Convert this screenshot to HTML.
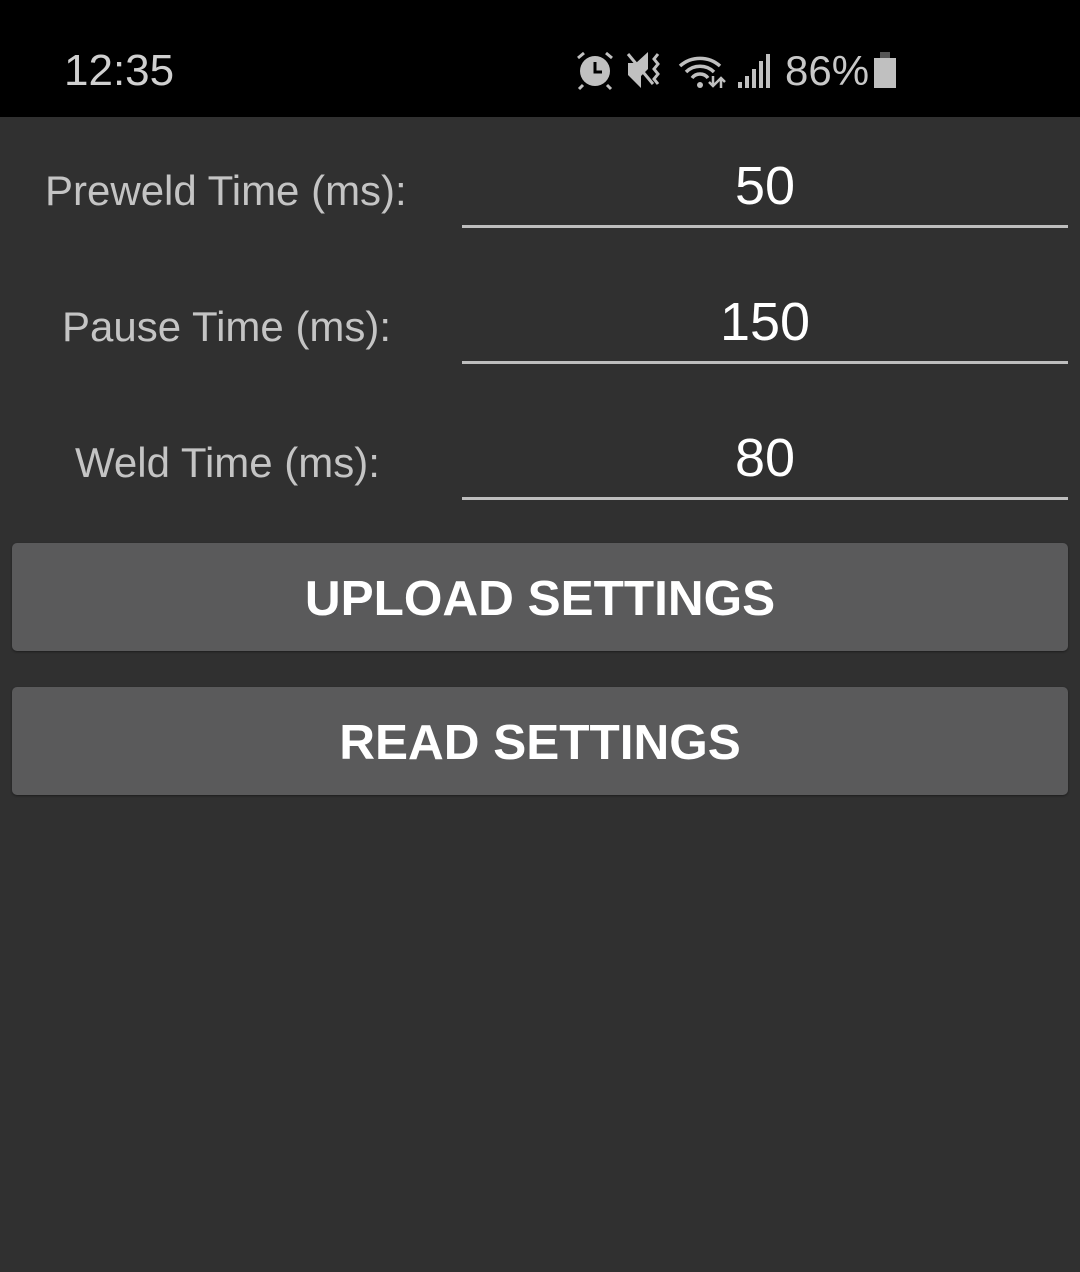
<!DOCTYPE html>
<html><head><style>
body{margin:0;width:1080px;height:1272px;background:#303030;font-family:"Liberation Sans",sans-serif;position:relative;overflow:hidden}
.sb{position:absolute;left:0;top:0;width:1080px;height:117px;background:#000}
.t{position:absolute;white-space:nowrap}
.lab{color:#c4c4c4;font-size:42px;}
.val{color:#fff;font-size:54px;width:606px;left:462px;text-align:center}
.ul{position:absolute;left:462px;width:606px;height:3px;background:#bdbdbd}
.btn{position:absolute;left:12px;width:1056px;height:108px;background:#5a5a5b;border-radius:5px;color:#fff;font-weight:bold;font-size:49.5px;text-align:center;line-height:112px;box-shadow:0 1px 2px rgba(0,0,0,.4)}
</style></head><body>
<div class="sb"></div>
<div class="t" style="left:64px;top:46px;color:#d0d0d0;font-size:44px">12:35</div>
<svg style="position:absolute;left:570px;top:48px" width="340" height="44" viewBox="0 0 340 44">
<g fill="#c0c0c0" stroke="#c0c0c0">
<circle cx="25" cy="23" r="15" stroke="none"/>
<path d="M25 14v10h7" stroke="#000" stroke-width="3" fill="none"/>
<path d="M8 10l6-5M42 10l-6-5M13 37l-4 4M37 37l4 4" stroke-width="3" fill="none"/>
<path d="M58 15h8l12-11v17l-7 7v12l-13-13z" stroke="none"/>
<path d="M58 6l25 30" stroke-width="3"/>
<path d="M88 6l-4 5 4 5-4 5 4 5-4 5 4 5" fill="none" stroke-width="3"/>
<path d="M110 18a30 30 0 0 1 40 0M116 24a20 20 0 0 1 28 0M122 30a10 10 0 0 1 16 0" fill="none" stroke-width="3.5"/>
<circle cx="130" cy="37" r="3" stroke="none"/>
<path d="M143 28v10M139 34l4 4 4-4M151 40v-10M147 34l4-4 4 4" fill="none" stroke-width="2.5"/>
<rect x="168" y="34" width="4" height="6" stroke="none"/><rect x="175" y="28" width="4" height="12" stroke="none"/><rect x="182" y="21" width="4" height="19" stroke="none"/><rect x="189" y="13" width="4" height="27" stroke="none"/><rect x="196" y="6" width="4" height="34" stroke="none"/>
<rect x="304" y="10" width="22" height="30" stroke="none"/><rect x="310" y="4" width="10" height="6" fill="#555" stroke="none"/>
</g></svg>
<div class="t" style="left:785px;top:47px;color:#c8c8c8;font-size:42px">86%</div>
<div class="t lab" style="left:45px;top:167px">Preweld Time (ms):</div>
<div class="t lab" style="left:62px;top:303px">Pause Time (ms):</div>
<div class="t lab" style="left:75px;top:439px">Weld Time (ms):</div>
<div class="t val" style="top:155px">50</div>
<div class="t val" style="top:291px">150</div>
<div class="t val" style="top:427px">80</div>
<div class="ul" style="top:225px"></div>
<div class="ul" style="top:361px"></div>
<div class="ul" style="top:497px"></div>
<div class="btn" style="top:543px">UPLOAD SETTINGS</div>
<div class="btn" style="top:687px">READ SETTINGS</div>
</body></html>
